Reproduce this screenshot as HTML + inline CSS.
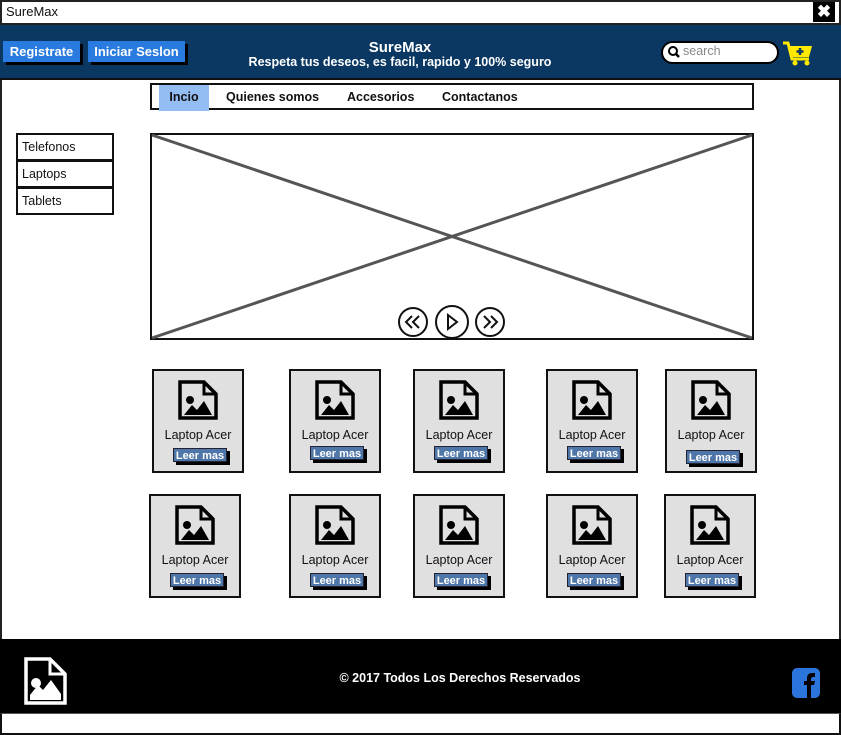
<!DOCTYPE html>
<html><head><meta charset="utf-8"><style>
*{margin:0;padding:0;box-sizing:border-box}
body{width:841px;height:735px;position:relative;background:#fff;font-family:"Liberation Sans",sans-serif;overflow:hidden}
.a{position:absolute}
.card{position:absolute;background:#e0e0e0;border:2px solid #111;width:92px;height:104px}
.card svg{position:absolute;left:50%;margin-left:-21px;top:9px}
.card .t{position:absolute;left:0;right:0;top:57px;text-align:center;font-size:12.5px;color:#111}
.card .b{position:absolute;left:19px;width:54px;height:14px;background:#4f76a8;color:#fff;font-size:11px;font-weight:bold;text-align:center;line-height:14px;box-shadow:3px 3px 0 #000;border:1px solid #223}
.nav span{position:absolute;top:0;height:26px;line-height:24px;font-size:12.5px;font-weight:bold;color:#111}
.side div{height:27px;border:2px solid #111;border-top-width:1px;font-size:12.5px;line-height:24px;padding-left:4px;color:#111;background:#fff}
</style></head><body>
<div class="a" style="left:0;top:0;width:841px;height:735px;border:2px solid #222"></div>
<div class="a" style="left:0;top:0;width:841px;height:25px;border-bottom:2px solid #222"></div>
<div class="a" style="left:6px;top:4px;font-size:13px;color:#111">SureMax</div>
<div class="a" style="left:813px;top:2px;width:22px;height:20px;background:#000;color:#fff;font-weight:bold;font-size:17px;text-align:center;line-height:20px">✖</div>
<div class="a" style="left:0;top:25px;width:841px;height:55px;background:#0a3862;border-bottom:2px solid #111"></div>
<div class="a" style="left:3px;top:41px;width:77px;height:21px;background:#2a7be0;color:#fff;font-size:13px;font-weight:bold;text-align:center;line-height:21px;box-shadow:3px 3px 0 #000">Registrate</div>
<div class="a" style="left:88px;top:41px;width:97px;height:21px;background:#2a7be0;color:#fff;font-size:13px;font-weight:bold;text-align:center;line-height:21px;box-shadow:3px 3px 0 #000">Iniciar Seslon</div>
<div class="a" style="left:200px;top:39px;width:400px;text-align:center;color:#fff;font-size:15px;font-weight:bold">SureMax</div>
<div class="a" style="left:200px;top:55px;width:400px;text-align:center;color:#fff;font-size:12.5px;font-weight:bold">Respeta tus deseos, es facil, rapido y 100% seguro</div>
<div class="a" style="left:661px;top:41px;width:118px;height:23px;background:#fff;border:2px solid #000;border-radius:12px"></div>
<svg class="a" style="left:667px;top:45px" width="14" height="14"><circle cx="6" cy="6" r="4" fill="none" stroke="#000" stroke-width="2"/><line x1="9" y1="9" x2="12" y2="12" stroke="#000" stroke-width="2.5"/></svg>
<div class="a" style="left:683px;top:44px;font-size:12.5px;color:#888">search</div>
<svg class="a" style="left:782px;top:40px" width="32" height="28"><path d="M1 3h5l4 16h17" fill="none" stroke="#ffea00" stroke-width="3"/><path d="M8 6h22l-3 11H11z" fill="#ffea00"/><circle cx="13" cy="23" r="2.5" fill="#ffea00"/><circle cx="25" cy="23" r="2.5" fill="#ffea00"/><path d="M18 8v7M14.5 11.5h7" stroke="#0a3862" stroke-width="2.5"/></svg>
<div class="a nav" style="left:150px;top:83px;width:604px;height:27px;border:2px solid #111">
<span style="left:7px;width:50px;background:#94bdf3;text-align:center">Incio</span>
<span style="left:74px">Quienes somos</span>
<span style="left:195px">Accesorios</span>
<span style="left:290px">Contactanos</span>
</div>
<div class="a side" style="left:16px;top:133px;width:98px;border-top:1px solid #111"><div>Telefonos</div><div>Laptops</div><div>Tablets</div></div>
<svg class="a" style="left:150px;top:133px" width="604" height="207"><rect x="1" y="1" width="602" height="205" fill="#fff" stroke="#111" stroke-width="2"/><line x1="2" y1="2" x2="602" y2="205" stroke="#555" stroke-width="3"/><line x1="602" y1="2" x2="2" y2="205" stroke="#555" stroke-width="3"/>
<circle cx="263" cy="189" r="14" fill="#fff" stroke="#111" stroke-width="2"/><path d="M262 183l-6 6 6 6M269 183l-6 6 6 6" fill="none" stroke="#111" stroke-width="2"/>
<circle cx="302" cy="189" r="16" fill="#fff" stroke="#111" stroke-width="2"/><path d="M298 182l9 7-9 7z" fill="none" stroke="#111" stroke-width="2"/>
<circle cx="340" cy="189" r="14" fill="#fff" stroke="#111" stroke-width="2"/><path d="M334 183l6 6-6 6M341 183l6 6-6 6" fill="none" stroke="#111" stroke-width="2"/>
</svg>
<svg width="0" height="0" style="position:absolute"><defs><symbol id="f" viewBox="0 0 42 40"><path d="M3 2h24l12 12v24H3z" fill="none" stroke="#000" stroke-width="3.5"/><path d="M27 2v12h12" fill="none" stroke="#000" stroke-width="3"/><circle cx="13" cy="20" r="4" fill="#000"/><path d="M7 35l8-10 5 5 7-9 8 14z" fill="#000"/></symbol></defs></svg>
<div class="card" style="left:152px;top:369px"><svg width="42" height="40"><use href="#f"/></svg><div class="t">Laptop Acer</div><div class="b" style="top:77px">Leer mas</div></div>
<div class="card" style="left:289px;top:369px"><svg width="42" height="40"><use href="#f"/></svg><div class="t">Laptop Acer</div><div class="b" style="top:75px">Leer mas</div></div>
<div class="card" style="left:413px;top:369px"><svg width="42" height="40"><use href="#f"/></svg><div class="t">Laptop Acer</div><div class="b" style="top:75px">Leer mas</div></div>
<div class="card" style="left:546px;top:369px"><svg width="42" height="40"><use href="#f"/></svg><div class="t">Laptop Acer</div><div class="b" style="top:75px">Leer mas</div></div>
<div class="card" style="left:665px;top:369px"><svg width="42" height="40"><use href="#f"/></svg><div class="t">Laptop Acer</div><div class="b" style="top:79px">Leer mas</div></div>
<div class="card" style="left:149px;top:494px"><svg width="42" height="40"><use href="#f"/></svg><div class="t">Laptop Acer</div><div class="b" style="top:77px">Leer mas</div></div>
<div class="card" style="left:289px;top:494px"><svg width="42" height="40"><use href="#f"/></svg><div class="t">Laptop Acer</div><div class="b" style="top:77px">Leer mas</div></div>
<div class="card" style="left:413px;top:494px"><svg width="42" height="40"><use href="#f"/></svg><div class="t">Laptop Acer</div><div class="b" style="top:77px">Leer mas</div></div>
<div class="card" style="left:546px;top:494px"><svg width="42" height="40"><use href="#f"/></svg><div class="t">Laptop Acer</div><div class="b" style="top:77px">Leer mas</div></div>
<div class="card" style="left:664px;top:494px"><svg width="42" height="40"><use href="#f"/></svg><div class="t">Laptop Acer</div><div class="b" style="top:77px">Leer mas</div></div>
<div class="a" style="left:0;top:639px;width:841px;height:76px;background:#000"></div>
<svg class="a" style="left:24px;top:657px" width="44" height="48"><path d="M2 2h24l15 15v29H2z" fill="none" stroke="#fff" stroke-width="3.5"/><path d="M26 2v15h15" fill="none" stroke="#fff" stroke-width="3"/><circle cx="12" cy="26" r="5" fill="#fff"/><path d="M6 43v-5l8-10 5 5 8-10 10 14v6z" fill="#fff"/></svg>
<div class="a" style="left:200px;top:671px;width:520px;text-align:center;color:#fff;font-size:12.5px;font-weight:bold">© 2017 Todos Los Derechos Reservados</div>
<svg class="a" style="left:792px;top:668px" width="28" height="30"><rect x="0" y="0" width="28" height="30" rx="5" fill="#2a74dc"/><path d="M15 30V17h-3v-4h3v-3c0-3 2-5 5-5h3v4h-2c-1 0-2 1-2 2v2h4l-1 4h-3v13z" fill="#000"/></svg>
<div class="a" style="left:0;top:713px;width:841px;height:22px;border:2px solid #111;border-top:1px solid #555;background:#fff"></div>
</body></html>
